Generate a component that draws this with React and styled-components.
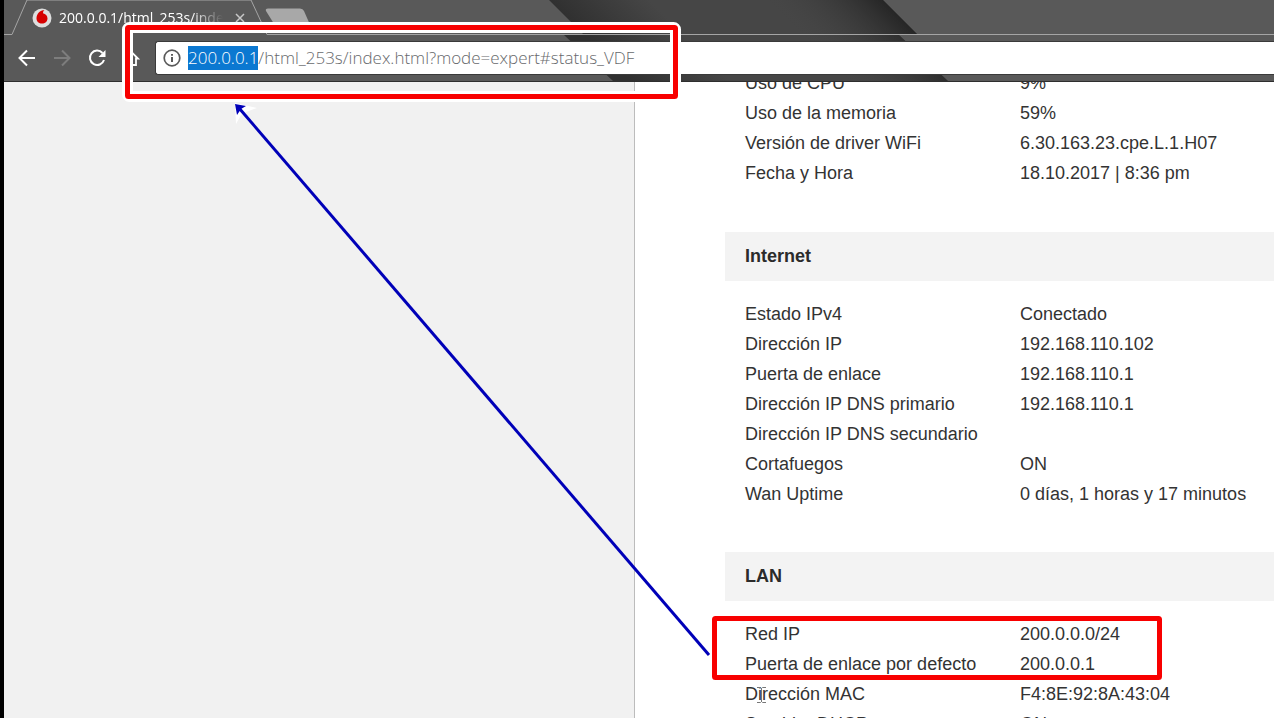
import React, { useEffect, useRef } from 'react';
import styled, { createGlobalStyle } from 'styled-components';

const GlobalStyle = createGlobalStyle`
* {
  box-sizing:border-box;
}
html, body, #root {
  height:100%;
  margin:0;
}
body {
  overflow:hidden;
  background-color:#fff;
}`;

const Window = styled.div`
position:relative;
display:flex;
flex-direction:column;
height:100vh;
overflow:hidden;
border-left:4px solid #000;
font-family:"Liberation Sans", Arial, sans-serif;`;

const Chrome = styled.header`
position:relative;
flex:none;
background-color:#595959;
border-bottom:1px solid #2e2e2e;`;

const Theme = styled.svg`
position:absolute;
top:0;
left:0;
width:100%;
height:100%;`;

const TabStrip = styled.div`
position:relative;
display:flex;
height:35px;
padding-left:28px;`;

const TabEdges = styled.svg`
position:absolute;
top:0;
left:0;
width:100%;
height:100%;`;

const Tab = styled.div`
position:relative;
display:flex;
align-items:center;
gap:7px;
width:218px;`;

const TabTitle = styled.span`
flex:1;
overflow:hidden;
white-space:nowrap;
font:14px "Open Sans", "Noto Sans", sans-serif;
color:#fff;
mask-image:linear-gradient(to right, #000 80%, transparent);`;

const IconButton = styled.button`
display:flex;
align-items:center;
justify-content:center;
flex:none;
width:${props => props.$size || 24}px;
height:${props => props.$size || 24}px;
padding:0;
border:0;
background:none;
color:${props => props.disabled ? '#7d7d7d' : '#fff'};`;

const Toolbar = styled.div`
position:relative;
display:flex;
align-items:center;
gap:11px;
height:46px;
padding-left:11px;`;

const AddressBar = styled.label`
display:flex;
align-items:center;
flex:1;
gap:7px;
height:34px;
padding-left:7px;
border:1px solid #3a3a3a;
border-right:0;
border-radius:3px 0 0 3px;
background-color:#fff;`;

const AddressInput = styled.input`
flex:1;
min-width:0;
padding:0;
border:0;
outline:none;
background:none;
font:300 17px/24px "Open Sans", "Noto Sans", sans-serif;
color:#67696c;
&::selection{
  background-color:#0b78d1;
  color:#fff;
}`;

const Page = styled.main`
display:flex;
flex:1;
min-height:0;
overflow:hidden;`;

const SidePanel = styled.aside`
flex:none;
width:631px;
background-color:#f1f1f1;
border-right:1px solid #bcbcbc;`;

const Status = styled.div`
flex:1;
min-width:0;
margin-top:-14px;
padding-left:90px;
color:#333;
font-size:18px;`;

const SectionTitle = styled.h2`
margin:0;
height:49px;
padding-left:20px;
background-color:#f3f3f3;
font-size:18px;
line-height:48px;
color:#2b2b2b;`;

const Table = styled.table`
border-collapse:collapse;
margin:${props => props.$first ? '0 0 44px' : '18px 0 43px'};
line-height:30px;
white-space:nowrap;`;

const Name = styled.th`
width:295px;
padding:0 0 0 20px;
text-align:left;
font-weight:normal;`;

const Value = styled.td`
padding:0;`;

const Annotations = styled.svg`
position:absolute;
top:0;
left:-4px;
width:1274px;
height:718px;
pointer-events:none;`;

const system = [
  ['Uso de CPU', '9%'],
  ['Uso de la memoria', '59%'],
  ['Versión de driver WiFi', '6.30.163.23.cpe.L.1.H07'],
  ['Fecha y Hora', '18.10.2017 | 8:36 pm']
];

const internet = [
  ['Estado IPv4', 'Conectado'],
  ['Dirección IP', '192.168.110.102'],
  ['Puerta de enlace', '192.168.110.1'],
  ['Dirección IP DNS primario', '192.168.110.1'],
  ['Dirección IP DNS secundario', ''],
  ['Cortafuegos', 'ON'],
  ['Wan Uptime', '0 días, 1 horas y 17 minutos']
];

const lan = [
  ['Red IP', '200.0.0.0/24'],
  ['Puerta de enlace por defecto', '200.0.0.1'],
  ['Dirección MAC', 'F4:8E:92:8A:43:04'],
  ['Servidor DHCP', 'ON']
];

const StatusTable = ({ rows, first }) => (
  <Table $first={first}>
    <tbody>
      {rows.map(([name, value]) => (
        <tr key={name}>
          <Name scope="row">{name}</Name>
          <Value>{value}</Value>
        </tr>
      ))}
    </tbody>
  </Table>
);

const App = () => {
  const address = useRef(null);

  // the host part starts out selected
  useEffect(() => {
    address.current.focus();
    address.current.setSelectionRange(0, 9);
  }, []);

  return (
    <Window>
      <GlobalStyle />
      <Chrome>
        <Theme aria-hidden="true">
          <defs>
            <linearGradient id="shade" gradientUnits="userSpaceOnUse" x1="562" y1="17" x2="612" y2="-33">
              <stop offset="0" stopColor="#303030" />
              <stop offset="1" stopColor="#464646" />
            </linearGradient>
            <linearGradient id="shadeRight" gradientUnits="userSpaceOnUse" x1="836" y1="77" x2="896" y2="17">
              <stop offset="0" stopColor="#464646" stopOpacity="0" />
              <stop offset="1" stopColor="#262626" />
            </linearGradient>
          </defs>
          <path d="M545 0H879L914 35H895L944 81H609L560 35H580Z" fill="url(#shade)" />
          <path d="M720 0H879L914 35H895L944 81H720Z" fill="url(#shadeRight)" />
        </Theme>
        <TabStrip>
          <TabEdges aria-hidden="true">
            <path d="M0 34.500H8L23 0H247L263 34.500H3000" fill="none" stroke="#a5a5a5" strokeWidth="1" />
            <path d="M264 8.500H296Q299 8.500 300 11L307 27H272L262 11Q261 8.500 264 8.500Z" fill="#a8a8a8" />
          </TabEdges>
          <Tab>
            <svg width="20" height="20" viewBox="0 0 20 20" aria-hidden="true">
              <circle cx="10" cy="10" r="9.500" fill="#dedede" />
              <path d="M12.500 2C8 2 4.500 6 4.500 10.500C4.500 13.500 7 15.500 10 15.500C13 15.500 15.500 13.500 15.500 10.500C15.500 7.500 13.500 6 11 5.200C11 3.800 11.500 2.600 12.500 2Z" fill="#d60000" />
            </svg>
            <TabTitle>200.0.0.1/html_253s/index.html</TabTitle>
            <IconButton $size={20} aria-label="Cerrar">
              <svg width="10" height="10" viewBox="0 0 10 10"><path d="M1 1L9 9M9 1L1 9" stroke="#c8c8c8" strokeWidth="1.500" /></svg>
            </IconButton>
          </Tab>
        </TabStrip>
        <Toolbar>
          <IconButton aria-label="Atrás">
            <svg width="18" height="18" viewBox="0 0 18 18"><path d="M17 9H2M9 1.500L1.500 9L9 16.500" fill="none" stroke="currentColor" strokeWidth="2" /></svg>
          </IconButton>
          <IconButton aria-label="Adelante" disabled>
            <svg width="18" height="18" viewBox="0 0 18 18"><path d="M1 9H16M9 1.500L16.500 9L9 16.500" fill="none" stroke="currentColor" strokeWidth="2" /></svg>
          </IconButton>
          <IconButton aria-label="Recargar">
            <svg width="18" height="18" viewBox="0 0 18 18"><path d="M14.500 4A7.200 7.200 0 1 0 16 11" fill="none" stroke="currentColor" strokeWidth="2" /><path d="M17.500 1V8H10.500Z" fill="currentColor" /></svg>
          </IconButton>
          <IconButton aria-label="Inicio">
            <svg width="20" height="18" viewBox="0 0 20 18"><path d="M0 9.500L8 1.500L16 9.500H14V16H10V11H6V16H2V9.500Z" fill="none" stroke="currentColor" strokeWidth="1.800" /></svg>
          </IconButton>
          <AddressBar>
            <svg width="18" height="18" viewBox="0 0 18 18" aria-hidden="true">
              <circle cx="9" cy="9" r="7.800" fill="none" stroke="#5a5a5a" strokeWidth="1.700" />
              <path d="M9 8V13M9 5V6.700" stroke="#5a5a5a" strokeWidth="2" />
            </svg>
            <AddressInput ref={address} aria-label="Dirección" spellCheck={false} defaultValue="200.0.0.1/html_253s/index.html?mode=expert#status_VDF" />
          </AddressBar>
        </Toolbar>
      </Chrome>
      <Page>
        <SidePanel />
        <Status>
          <StatusTable rows={system} first />
          <SectionTitle>Internet</SectionTitle>
          <StatusTable rows={internet} />
          <SectionTitle>LAN</SectionTitle>
          <StatusTable rows={lan} />
        </Status>
      </Page>
      <Annotations aria-hidden="true">
        <rect x="127.500" y="27.500" width="548" height="69" rx="2" fill="none" stroke="#fff" strokeWidth="11" />
        <rect x="127.500" y="27.500" width="548" height="69" rx="1" fill="none" stroke="#f80000" strokeWidth="5" />
        <rect x="714.500" y="618.500" width="445" height="59" rx="1" fill="none" stroke="#f80000" strokeWidth="5" />
        {/* arrow from the LAN box up to the address bar */}
        <path d="M235 103L257 108L246 112L241 115L236 124Z" fill="#fff" />
        <path d="M709 655L239 108" stroke="#0000b8" strokeWidth="3" />
        <path d="M235 104L246 106L241 109L237 115Z" fill="#0000b8" />
        {/* text cursor */}
        <path d="M757 687.500H760.500L761.500 688.500L762.500 687.500H766M757 702.500H760.500L761.500 701.500L762.500 702.500H766M761.500 688V702" fill="none" stroke="#777" strokeWidth="1" />
      </Annotations>
    </Window>
  );
};

export default App;
